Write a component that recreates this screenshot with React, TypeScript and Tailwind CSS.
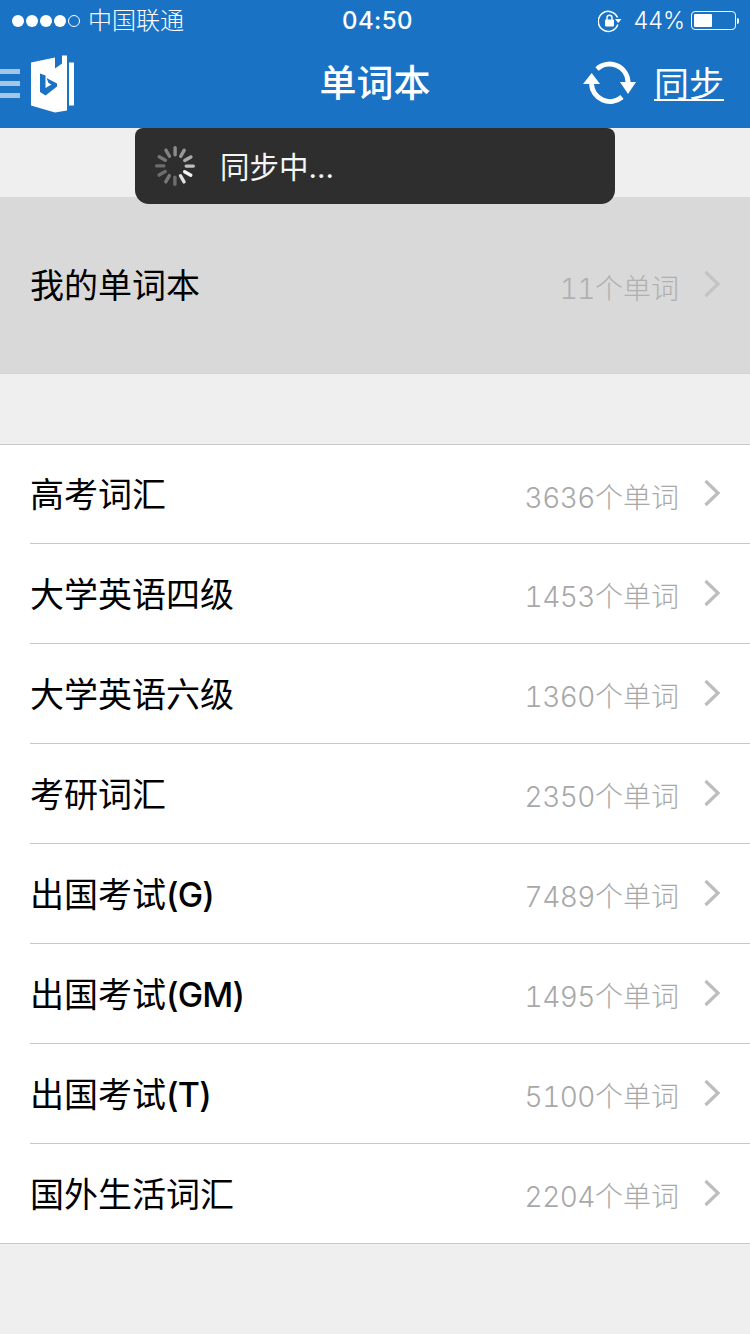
import React from "react";

const F = "font-['Inter','Noto_Sans_CJK_SC',sans-serif]";

const rows: [string, string, string][] = [
  ["高考词汇", "", "3636"],
  ["大学英语四级", "", "1453"],
  ["大学英语六级", "", "1360"],
  ["考研词汇", "", "2350"],
  ["出国考试", "(G)", "7489"],
  ["出国考试", "(GM)", "1495"],
  ["出国考试", "(T)", "5100"],
  ["国外生活词汇", "", "2204"],
];

function Chevron({ light }: { light?: boolean }) {
  return (
    <svg width="18" height="28" viewBox="0 0 18 28" className="ml-[24px] mb-[2px] shrink-0">
      <path d="M2.5 2 L15 14 L2.5 26" fill="none" stroke={light ? "#c4c4c4" : "#bdbdbd"} strokeWidth="3.2" />
    </svg>
  );
}

function Row({ name, suffix, count, first, last }: { name: string; suffix: string; count: string; first?: boolean; last?: boolean }) {
  return (
    <div className="pl-[30px]">
      <div className={`${first || last ? "h-[99px]" : "h-[100px]"} flex items-center pr-[29px] ${last ? "" : "border-b border-[#c8c8c8]"}`}>
        <span className="flex-1 text-[34px] text-black leading-none mt-[2px]">
          {name}
          <span className="font-[450] tracking-[-0.8px]">{suffix}</span>
        </span>
        <span className="text-[28px] text-[#a8a8a8] leading-none font-light tabular-nums mt-[7px]">
          <span className="tracking-[-0.5px]">{count}</span>个单词
        </span>
        <Chevron />
      </div>
    </div>
  );
}

function Spinner() {
  const bars = Array.from({ length: 12 }, (_, i) => i);
  return (
    <svg width="40" height="40" viewBox="0 0 40 40">
      {bars.map((i) => (
        <rect
          key={i}
          x="18.4"
          y="0"
          width="3.4"
          height="10.5"
          rx="1.7"
          fill="#fff"
          opacity={[0.45, 0.5, 0.6, 0.7, 0.95, 0.85, 0.3, 0.35, 0.3, 0.3, 0.35, 0.4][i]}
          transform={`rotate(${i * 30} 20 20)`}
        />
      ))}
    </svg>
  );
}

export default function App() {
  return (
    <div className={`relative w-[750px] h-[1334px] bg-[#efefef] overflow-hidden ${F}`}>
      <header className="bg-[#1a72c5] h-[128px] flex flex-col text-white">
        <div className="h-[40px] flex items-center pl-[12px] pr-[11px]">
          <div className="flex items-center gap-[2px] mt-[1px]">
            {[0, 1, 2, 3].map((i) => (
              <span key={i} className="w-[12px] h-[12px] rounded-full bg-white" />
            ))}
            <span className="w-[12px] h-[12px] rounded-full border border-white" />
          </div>
          <span className="ml-[8px] text-[24px] leading-none mt-[2px] font-light">中国联通</span>
          <span className="absolute left-[5px] right-0 top-[8px] text-center text-[24px] leading-[26px] font-medium tracking-[0.4px]">04:50</span>
          <div className="ml-auto flex items-center mt-[1px]">
            <svg width="24" height="24" viewBox="0 0 24 24" className="mr-[11px]">
              <path d="M19.5 8.5 A10 10 0 1 0 19.8 15.5" fill="none" stroke="#fff" strokeWidth="1.5" />
              <path d="M17 10 H23.5 L20.2 14 Z" fill="#fff" />
              <rect x="7" y="10.5" width="9" height="7" rx="1" fill="#fff" />
              <path d="M9 11 V8.8 A2.5 2.5 0 0 1 14 8.8 V11" fill="none" stroke="#fff" strokeWidth="1.4" />
            </svg>
            <span className="text-[23.5px] leading-none font-light">44%</span>
            <div className="ml-[6px] w-[45px] h-[19px] rounded-[4px] border border-white p-[2px]">
              <div className="w-[18px] h-full bg-white rounded-[1px]" />
            </div>
            <span className="ml-[1px] w-[2px] h-[6px] bg-white rounded-r-[2px]" />
          </div>
        </div>
        <div className="relative flex-1 flex items-center justify-between pr-[26px]">
          <div className="flex items-center">
            <div className="flex flex-col gap-[7px] mr-[10px] mt-[-2px]">
              <span className="block w-[20px] h-[5px] bg-[#a3c6e8]" />
              <span className="block w-[20px] h-[5px] bg-[#a3c6e8]" />
              <span className="block w-[20px] h-[5px] bg-[#a3c6e8]" />
            </div>
            <svg width="46" height="60" viewBox="0 0 46 60" className="mt-[1px]">
              <path d="M1 7.5 L25 2.5 V13.5 L32 8.5 V0.5 H37 V55.5 L25 57.5 L1 50.5 Z" fill="#fff" />
              <rect x="39" y="7.5" width="5" height="43" fill="#fff" />
              <path d="M10 18.5 L15.5 20.5 V33 L21.5 29.5 L18.5 28 L16.5 23 L27 28.5 V31.5 L15.5 40.5 L10 37 Z" fill="#1a72c5" />
            </svg>
          </div>
          <span className="absolute left-0 right-0 text-center text-[37px] leading-none font-medium top-[25px]">单词本</span>
          <div className="flex items-center">
            <svg width="54" height="46" viewBox="0 0 54 46" className="mr-[17px]">
              <path d="M14 8 A18.5 18.5 0 0 1 45 21" fill="none" stroke="#fff" strokeWidth="5" />
              <path d="M8.5 23 A18.5 18.5 0 0 0 39 36" fill="none" stroke="#fff" strokeWidth="5" />
              <path d="M8.7 12 L0 23 L17 23 Z" fill="#fff" />
              <path d="M37 21 L53 21 L45 33 Z" fill="#fff" />
            </svg>
            <span className="text-[35px] leading-[29px] border-b-2 border-white mt-[3px]">同步</span>
          </div>
        </div>
      </header>

      <div className="h-[69px]" />

      <div className="h-[177px] bg-[#d9d9d9] flex items-center pl-[30px] pr-[29px] border-b border-[#d4d4d4]">
        <span className="flex-1 text-[34px] text-black leading-none mt-[2px]">我的单词本</span>
        <span className="text-[28px] text-[#b0b0b0] leading-none font-light tabular-nums mt-[8px]">
          <span className="tracking-[-0.5px]">11</span>个单词
        </span>
        <Chevron light />
      </div>

      <div className="h-[70px]" />

      <div className="bg-white border-t border-b border-[#c8c8c8]">
        {rows.map(([n, s, c], i) => (
          <Row key={n + s} name={n} suffix={s} count={c} first={i === 0} last={i === rows.length - 1} />
        ))}
      </div>

      <div className="absolute left-[135px] top-[128px] w-[480px] h-[76px] bg-[#2e2e2e] rounded-b-[14px] rounded-t-[8px] flex items-center pl-[20px]">
        <Spinner />
        <span className="ml-[25px] text-[29.5px] text-[#f5f5f5] leading-none mt-[4px]">同步中...</span>
      </div>
    </div>
  );
}
